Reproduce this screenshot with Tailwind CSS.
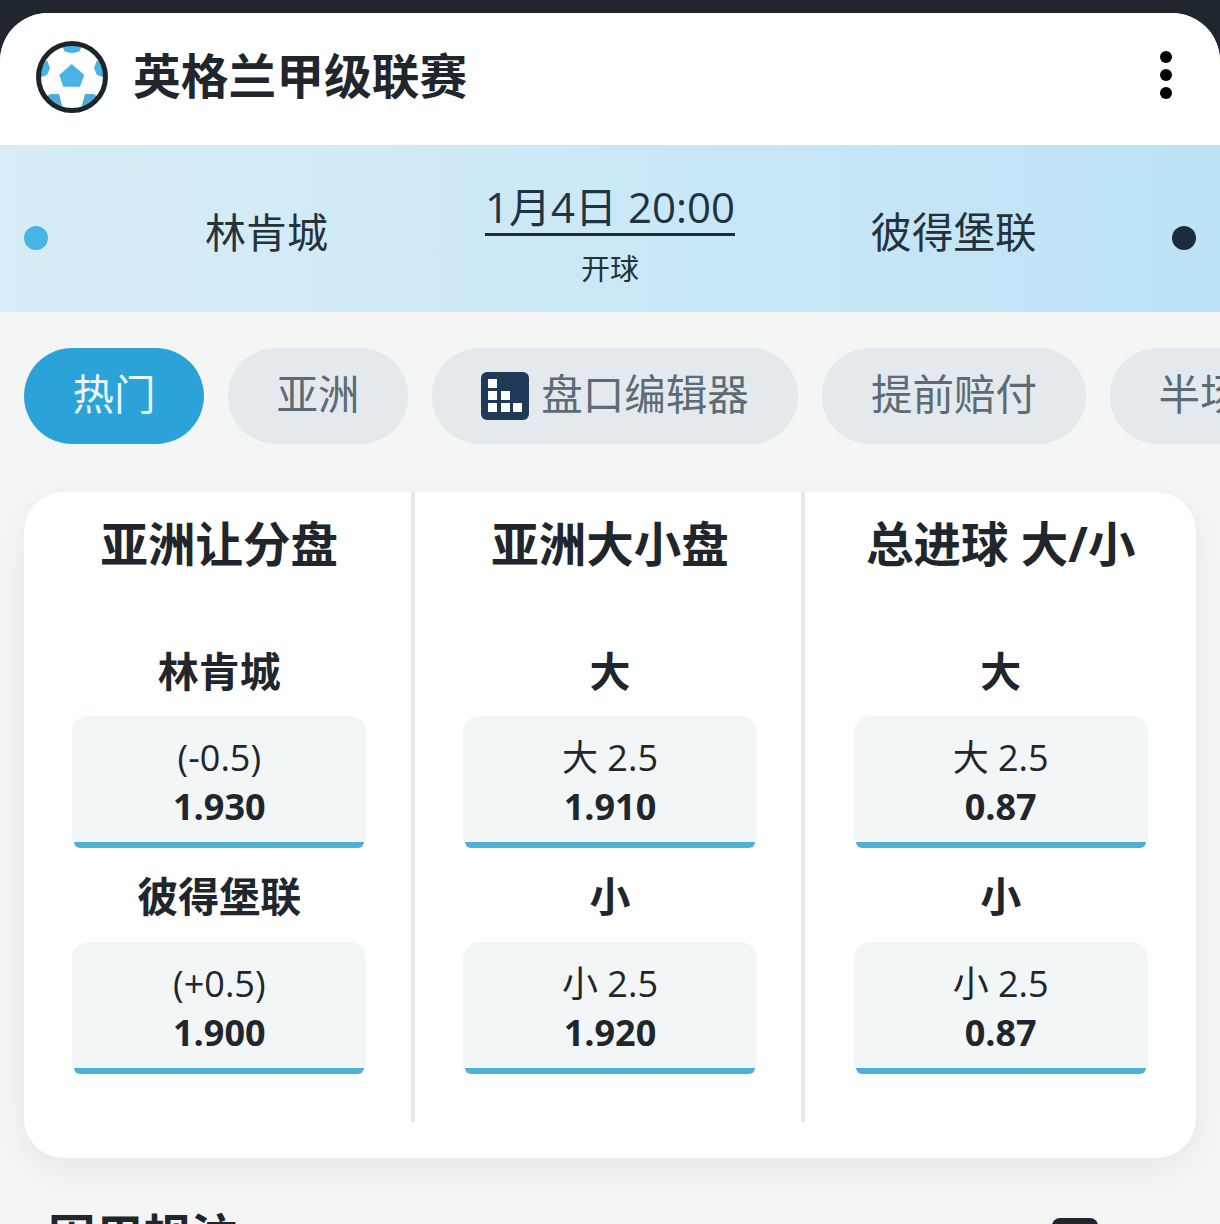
<!DOCTYPE html>
<html lang="zh">
<head>
    <meta charset="UTF-8">
    <meta name="viewport" content="width=device-width, initial-scale=1.0">
    <title>英格兰甲级联赛</title>
    <script src="https://cdn.jsdelivr.net/npm/@tailwindcss/browser@4"></script>
</head>
<body class="w-[1220px] h-[1224px] overflow-hidden bg-[#1f262d] font-['Open_Sans','Noto_Sans_CJK_SC',sans-serif] text-[#20262b]">
    <div class="mt-[13px] h-[1211px] rounded-t-[48px] overflow-hidden bg-[#f4f6f6]">

        <header class="h-[132px] bg-white flex items-center justify-between pl-[36px] pr-[48px]">
            <div class="flex items-center gap-[25px] -mt-[4px]">
                <svg width="72" height="72" viewBox="0 0 72 72">
                    <defs><clipPath id="ball"><circle cx="36" cy="36" r="34"/></clipPath></defs>
                    <circle cx="36" cy="36" r="34" fill="#fff"/>
                    <g clip-path="url(#ball)" fill="#4ab3e6">
                        <path d="M35.7 23 L48.3 34 L44 45.7 L27.3 45.7 L23.3 34 Z"/>
                        <path d="M26 2 L46 2 L44 10 Q36 14 28 10 Z"/>
                        <path d="M3 26 L11 19 L14 27 L11 34 L3 37 Z"/>
                        <path d="M69 26 L61 19 L58 27 L61 34 L69 37 Z"/>
                        <path d="M14 53 L23 53 L27 68 L18 66 L8 58 Z" fill="#4fa9dd"/>
                        <path d="M58 53 L49 53 L45 68 L54 66 L64 58 Z" fill="#4fa9dd"/>
                    </g>
                    <circle cx="36" cy="36" r="33.5" fill="none" stroke="#1c2529" stroke-width="5"/>
                </svg>
                <h1 class="text-[47.75px] leading-none font-bold -mt-[2px]">英格兰甲级联赛</h1>
            </div>
            <div class="flex flex-col gap-[6px] -mt-[8px]">
                <span class="w-[12px] h-[12px] rounded-full bg-black"></span>
                <span class="w-[12px] h-[12px] rounded-full bg-black"></span>
                <span class="w-[12px] h-[12px] rounded-full bg-black"></span>
            </div>
        </header>

        <section class="h-[167px] bg-gradient-to-r from-[#d8edf5] to-[#bde3f7] flex items-center px-[24px]">
            <span class="w-[24px] h-[24px] rounded-full bg-[#45b4e6] shrink-0 mt-[18px]"></span>
            <div class="w-[437px] shrink-0 text-center text-[41px] leading-none text-[#25323a] mt-[8px]">林肯城</div>
            <div class="flex flex-col items-center w-[250px] shrink-0 mt-[14px]">
                <div class="w-full text-center text-[42px] leading-[50px] pb-[1px] whitespace-nowrap border-b-[3px] border-[#1b2c3d] text-[#1f3344]">1月4日 20:00</div>
                <div class="text-[29px] leading-[40px] mt-[13px] text-[#25323a]">开球</div>
            </div>
            <div class="flex-1 text-center text-[41.5px] leading-none text-[#25323a] mt-[8px]">彼得堡联</div>
            <span class="w-[24px] h-[24px] rounded-full bg-[#1b2c3d] shrink-0 mt-[18px]"></span>
        </section>

        <nav class="flex gap-[24px] pl-[24px] pt-[36px] whitespace-nowrap overflow-hidden text-[41.5px] leading-none">
            <div class="h-[96px] w-[180px] shrink-0 rounded-full bg-[#2ba3d9] text-[#eaf6fb] flex items-center justify-center pb-[2px]">热门</div>
            <div class="h-[96px] w-[180px] shrink-0 rounded-full bg-[#e4e9ed] text-[#5c6b74] flex items-center justify-center pb-[2px]">亚洲</div>
            <div class="h-[96px] w-[366px] shrink-0 rounded-full bg-[#e4e9ed] text-[#5c6b74] flex items-center justify-center gap-[12px]">
                <svg width="48" height="48" viewBox="0 0 48 48">
                    <rect width="48" height="48" rx="6" fill="#1f3a57"/>
                    <g fill="#fff">
                        <rect x="7" y="7" width="9" height="9"/>
                        <rect x="7" y="19" width="9" height="9"/>
                        <rect x="20" y="19" width="9" height="9"/>
                        <rect x="7" y="31" width="9" height="9"/>
                        <rect x="20" y="31" width="9" height="9"/>
                        <rect x="32" y="31" width="9" height="9"/>
                    </g>
                </svg>
                <span class="-mt-[2px]">盘口编辑器</span>
            </div>
            <div class="h-[96px] w-[264px] shrink-0 rounded-full bg-[#e4e9ed] text-[#5c6b74] flex items-center justify-center pb-[2px]">提前赔付</div>
            <div class="h-[96px] w-[180px] shrink-0 rounded-full bg-[#e4e9ed] text-[#5c6b74] flex items-center justify-center pb-[2px]">半场</div>
        </nav>

        <main class="mx-[24px] mt-[48px] h-[666px] bg-white rounded-[40px] shadow-[0_12px_40px_rgba(0,0,0,0.06)] overflow-hidden">
            <div class="grid grid-cols-3 h-[630px]">

                <div class="flex flex-col items-center shadow-[inset_-4px_0_0_#e6e8e9]">
                    <h2 class="text-[47.5px] leading-none font-bold mt-[28px]">亚洲让分盘</h2>
                    <div class="text-[41px] leading-none font-bold mt-[83px]">林肯城</div>
                    <div class="mt-[24px] w-[294px]">
                        <div class="h-[126px] rounded-t-[16px] rounded-b-[2px] bg-[#f3f6f7] flex flex-col items-center pt-[20px]">
                            <span class="text-[36px] leading-[44px]">(-0.5)</span>
                            <span class="text-[36px] leading-[54px] font-bold">1.930</span>
                        </div>
                        <div class="h-[6px] mx-[2px] rounded-b-[6px] bg-[#4fb0d6]"></div>
                    </div>
                    <div class="text-[41px] leading-none font-bold mt-[28px]">彼得堡联</div>
                    <div class="mt-[25px] w-[294px]">
                        <div class="h-[126px] rounded-t-[16px] rounded-b-[2px] bg-[#f3f6f7] flex flex-col items-center pt-[20px]">
                            <span class="text-[36px] leading-[44px]">(+0.5)</span>
                            <span class="text-[36px] leading-[54px] font-bold">1.900</span>
                        </div>
                        <div class="h-[6px] mx-[2px] rounded-b-[6px] bg-[#4fb0d6]"></div>
                    </div>
                </div>

                <div class="flex flex-col items-center shadow-[inset_-4px_0_0_#e6e8e9]">
                    <h2 class="text-[47.5px] leading-none font-bold mt-[28px]">亚洲大小盘</h2>
                    <div class="text-[41px] leading-none font-bold mt-[83px]">大</div>
                    <div class="mt-[24px] w-[294px]">
                        <div class="h-[126px] rounded-t-[16px] rounded-b-[2px] bg-[#f3f6f7] flex flex-col items-center pt-[20px]">
                            <span class="text-[36px] leading-[44px]">大 2.5</span>
                            <span class="text-[36px] leading-[54px] font-bold">1.910</span>
                        </div>
                        <div class="h-[6px] mx-[2px] rounded-b-[6px] bg-[#4fb0d6]"></div>
                    </div>
                    <div class="text-[41px] leading-none font-bold mt-[28px]">小</div>
                    <div class="mt-[25px] w-[294px]">
                        <div class="h-[126px] rounded-t-[16px] rounded-b-[2px] bg-[#f3f6f7] flex flex-col items-center pt-[20px]">
                            <span class="text-[36px] leading-[44px]">小 2.5</span>
                            <span class="text-[36px] leading-[54px] font-bold">1.920</span>
                        </div>
                        <div class="h-[6px] mx-[2px] rounded-b-[6px] bg-[#4fb0d6]"></div>
                    </div>
                </div>

                <div class="flex flex-col items-center">
                    <h2 class="text-[47.5px] leading-none font-bold mt-[28px]">总进球 大/小</h2>
                    <div class="text-[41px] leading-none font-bold mt-[83px]">大</div>
                    <div class="mt-[24px] w-[294px]">
                        <div class="h-[126px] rounded-t-[16px] rounded-b-[2px] bg-[#f3f6f7] flex flex-col items-center pt-[20px]">
                            <span class="text-[36px] leading-[44px]">大 2.5</span>
                            <span class="text-[36px] leading-[54px] font-bold">0.87</span>
                        </div>
                        <div class="h-[6px] mx-[2px] rounded-b-[6px] bg-[#4fb0d6]"></div>
                    </div>
                    <div class="text-[41px] leading-none font-bold mt-[28px]">小</div>
                    <div class="mt-[25px] w-[294px]">
                        <div class="h-[126px] rounded-t-[16px] rounded-b-[2px] bg-[#f3f6f7] flex flex-col items-center pt-[20px]">
                            <span class="text-[36px] leading-[44px]">小 2.5</span>
                            <span class="text-[36px] leading-[54px] font-bold">0.87</span>
                        </div>
                        <div class="h-[6px] mx-[2px] rounded-b-[6px] bg-[#4fb0d6]"></div>
                    </div>
                </div>

            </div>
        </main>

        <div class="flex items-start justify-between pl-[48px] pr-[122px] mt-[54px]">
            <h2 class="text-[47.5px] leading-none font-bold">固用规注</h2>
            <span class="w-[46px] h-[46px] mt-[6px] rounded-[8px] bg-[#1f262d]"></span>
        </div>
    </div>
</body>
</html>
